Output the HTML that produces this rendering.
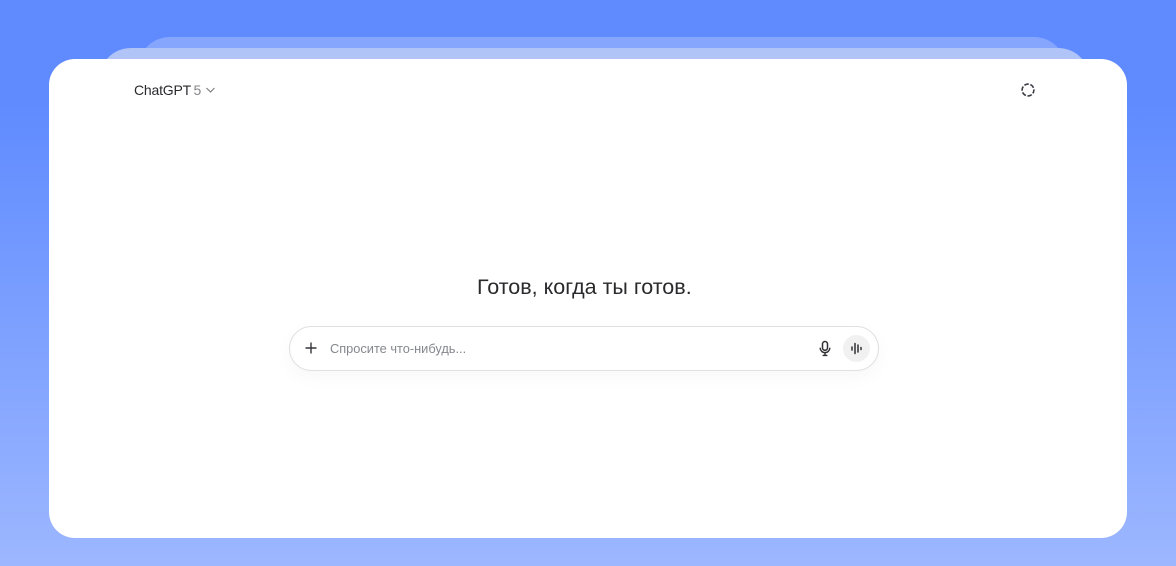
<!DOCTYPE html>
<html><head><meta charset="utf-8">
<style>
html,body{margin:0;padding:0}
body{width:1176px;height:566px;position:relative;overflow:hidden;background:linear-gradient(180deg,#5f8bff 0%,#5f8bff 18%,#9db7ff 100%);font-family:"Liberation Sans","DejaVu Sans",sans-serif}
.l{position:absolute}
.t{position:absolute;white-space:nowrap;line-height:1}
</style></head><body>
<div class="l" style="left:138px;top:37px;width:928px;height:60px;border-radius:32px 32px 0 0;background:#86a5fd"></div>
<div class="l" style="left:99px;top:48px;width:991px;height:60px;border-radius:32px 32px 0 0;background:#b0c4f8"></div>
<div class="l" style="left:49px;top:59px;width:1078px;height:479px;border-radius:26px;background:#fff"></div>
<div class="t" style="left:134px;top:83px;font-size:14px;letter-spacing:-.2px;color:#2a2a2e">ChatGPT</div>
<div class="t" style="left:193.5px;top:83px;font-size:14px;color:#85858a">5</div>
<svg class="l" style="left:205px;top:85px" width="11" height="10" viewBox="0 0 11 10" fill="none"><path d="M1.5 3l4 4 4-4" stroke="#77777c" stroke-width="1"/></svg>
<svg class="l" style="left:1020px;top:82px" width="16" height="16" viewBox="0 0 16 16" fill="none"><circle cx="8" cy="8" r="5.9" stroke="#3a3d45" stroke-width="1.6" stroke-dasharray="4.6 1.6" stroke-dashoffset="1"/></svg>
<div class="t" style="left:477px;top:277px;font-size:21.5px;color:#2a2a2d">Готов, когда ты готов.</div>
<div class="l" style="left:289px;top:326px;width:588px;height:43px;border:1px solid #e0e0e3;border-radius:23px;background:#fff;box-shadow:0 6px 18px rgba(0,0,0,.035)"></div>
<svg class="l" style="left:303px;top:340px" width="16" height="16" viewBox="0 0 16 16" fill="none"><path d="M8 2.5v11M2.5 8h11" stroke="#35353a" stroke-width="1.4"/></svg>
<div class="t" style="left:330px;top:343px;font-size:12.8px;color:#85878e">Спросите что-нибудь...</div>
<svg class="l" style="left:817px;top:340px" width="16" height="17" viewBox="0 0 16 17" fill="none"><rect x="5.5" y="1.5" width="5" height="8.8" rx="2.5" stroke="#2f2f34" stroke-width="1.5"/><path d="M3.2 7.8a4.8 4.8 0 0 0 9.6 0M8 12.8v2.6M5.6 15.4h4.8" stroke="#2f2f34" stroke-width="1.4"/></svg>
<div class="l" style="left:843px;top:335px;width:27px;height:27px;border-radius:50%;background:#f1f1f2"></div>
<svg class="l" style="left:849px;top:341px" width="15" height="15" viewBox="0 0 15 15" fill="none"><path d="M3 6v3M6 2.5v10M9 4v7M12 6.5v2" stroke="#2f2f34" stroke-width="1.5" stroke-linecap="round"/></svg>
</body></html>
